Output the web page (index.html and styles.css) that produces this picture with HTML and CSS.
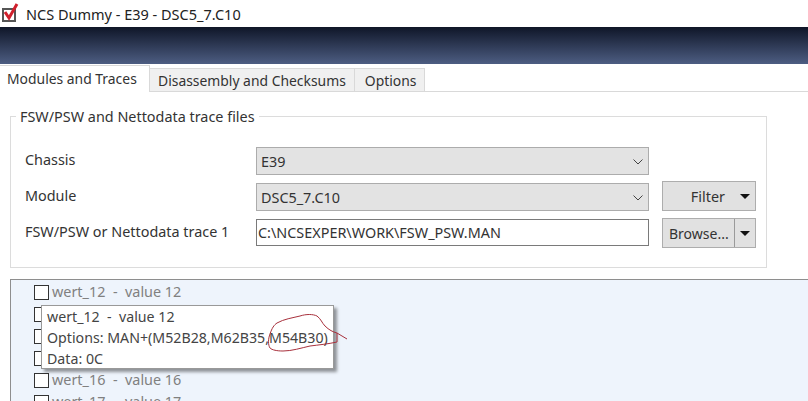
FILE: index.html
```html
<!DOCTYPE html>
<html lang="en">
<head>
  <meta charset="UTF-8">
  <title>NCS Dummy - E39 - DSC5_7.C10</title>
  <link rel="stylesheet" href="styles.css">
</head>
<body>
  <div class="titlebar">
    <svg class="app-icon" width="19" height="24" viewBox="0 0 19 24">
      <rect x="3" y="9" width="12" height="12" fill="#fff" stroke="#555" stroke-width="2"/>
      <path d="M5 12 L9 18 L17 4" fill="none" stroke="#d0202c" stroke-width="3"/>
    </svg>
    <span>NCS Dummy - E39 - DSC5_7.C10</span>
  </div>
  <div class="banner"></div>

  <div class="tabs">
    <div class="tab active">Modules and Traces</div>
    <div class="tab">Disassembly and Checksums</div>
    <div class="tab tab-last">Options</div>
  </div>

  <div class="page">
    <fieldset class="group">
      <legend>FSW/PSW and Nettodata trace files</legend>
      <div class="form">
        <label class="label-up">Chassis</label>
        <div class="combo">E39
          <svg class="chevron" width="10" height="6" viewBox="0 0 10 6"><path d="M0.5 0.5 L5 5 L9.5 0.5" fill="none" stroke="#444"/></svg>
        </div>
        <div></div>

        <label class="label-up">Module</label>
        <div class="combo">DSC5_7.C10
          <svg class="chevron" width="10" height="6" viewBox="0 0 10 6"><path d="M0.5 0.5 L5 5 L9.5 0.5" fill="none" stroke="#444"/></svg>
        </div>
        <div class="btn filter">Filter <span class="arrow"></span></div>

        <label class="label-up">FSW/PSW or Nettodata trace 1</label>
        <div class="textbox">C:\NCSEXPER\WORK\FSW_PSW.MAN</div>
        <div class="btn browse"><span class="browse-text">Browse...</span><span class="browse-drop"><span class="arrow"></span></span></div>
      </div>
    </fieldset>

    <div class="list">
      <div class="row"><span class="check"></span>wert_12 &nbsp;-&nbsp; value 12</div>
      <div class="row"><span class="check"></span></div>
      <div class="row"><span class="check"></span></div>
      <div class="row"><span class="check"></span></div>
      <div class="row"><span class="check"></span>wert_16 &nbsp;-&nbsp; value 16</div>
      <div class="row"><span class="check"></span>wert_17 &nbsp;-&nbsp; value 17</div>

      <div class="tooltip">
        <div>wert_12 &nbsp;-&nbsp; value 12</div>
        <div>Options: MAN+(M52B28,M62B35,M54B30)</div>
        <div>Data: 0C</div>
      </div>
      <!-- red pen circle drawn on the screenshot -->
      <svg class="scribble" width="80" height="40" viewBox="0 0 80 40">
        <path d="M2 22 C4 16 6 13 9 11 C16 7 24 6 32 4 C38 2 45 2 49 4 C53 7 54 11 57 14 C61 18 65 20 69 21 L69 30 C60 32 50 33 42 34 C33 36 24 39 15 39 C9 39 4 38 2 36 C0 33 0 27 2 22 Z" fill="none" stroke="#a8303c"/>
        <path d="M69 21 L79 27" fill="none" stroke="#a8303c"/>
      </svg>
    </div>
  </div>
</body>
</html>
```

FILE: styles.css
```css
html, body {
  margin: 0;
  height: 401px;
  overflow: hidden;
}

body {
  font-family: "Noto Sans", "Open Sans", sans-serif;
  font-size: 14.4px;
  color: #333;
  background-color: #fff;
}

.titlebar {
  display: flex;
  align-items: center;
  gap: 7px;
  height: 27px;
  font-size: 14.5px;
  color: #222;
}

.app-icon {
  flex: none;
  margin-bottom: 3px;
}

.banner {
  height: 37px;
  background: linear-gradient(#0f1628, #4d5d82);
}

.tabs {
  display: flex;
  align-items: flex-end;
  height: 27px;
  font-size: 13.9px;
  border-bottom: 1px solid #d9d9d9;
}

.tab {
  height: 22px;
  padding: 0 8px;
  line-height: 23px;
  background-color: #f0f0f0;
  border: 1px solid #d9d9d9;
  border-bottom: none;
  border-left: none;
}

.tab.active {
  height: 26px;
  width: 134px;
  line-height: 25px;
  padding: 0 8px 0 7px;
  margin-bottom: -1px;
  background-color: #fff;
  border-left: none;
}

.tab-last {
  padding: 0 8px 0 10px;
}

.page {
  padding: 15px 0 0 10px;
}

.group {
  width: 755px;
  box-sizing: content-box;
  height: 159px;
  margin: 0;
  padding: 0;
  border: 1px solid #dcdcdc;
}

.group legend {
  margin-left: 5px;
  padding: 0 4px 0 4px;
  color: #333;
}

.form {
  display: grid;
  grid-template-columns: 218px 393px 94px;
  grid-template-rows: 28px 28px 27px;
  column-gap: 13px;
  row-gap: 8px;
  padding: 21px 0 0 14px;
  align-items: center;
}

.label-up {
  margin-top: -3px;
}

.combo {
  position: relative;
  height: 26px;
  line-height: 27px;
  padding-left: 4px;
  background-color: #e3e3e3;
  border: 1px solid #acacac;
}

.chevron {
  position: absolute;
  right: 5px;
  top: 11px;
}

.textbox {
  height: 25px;
  line-height: 25px;
  padding-left: 1px;
  background-color: #fff;
  border: 1px solid #7a7a7a;
}

.btn {
  box-sizing: border-box;
  height: 30px;
  background-color: #e1e1e1;
  border: 1px solid #adadad;
  display: flex;
  align-items: center;
}

.filter {
  justify-content: flex-end;
  gap: 15px;
  padding-right: 5px;
  margin-top: -2px;
}

.browse {
  margin-top: 1px;
}

.browse-text {
  flex: 1;
  padding-left: 6px;
  font-size: 14px;
}

.browse-drop {
  display: flex;
  align-items: center;
  justify-content: center;
  width: 20px;
  height: 100%;
  border-left: 1px solid #9a9a9a;
}

.arrow {
  display: inline-block;
  width: 0;
  height: 0;
  border-left: 5px solid transparent;
  border-right: 5px solid transparent;
  border-top: 5px solid #111;
}

.list {
  position: relative;
  margin-top: 11px;
  height: 122px;
  padding-top: 1px;
  background-color: #eef4fc;
  border-top: 1px solid #8e8e8e;
  border-left: 1px solid #8e8e8e;
}

.row {
  box-sizing: border-box;
  display: flex;
  align-items: center;
  height: 22px;
  padding: 0 0 2px 23px;
  color: #808080;
  white-space: pre;
}

.check {
  flex: none;
  width: 13px;
  height: 13px;
  margin: 2px 3px 0 0;
  border: 1px solid #333;
  background-color: #fff;
}

.tooltip {
  position: absolute;
  left: 30px;
  top: 25px;
  width: 276px;
  height: 62px;
  padding-left: 5px;
  padding-right: 10px;
  line-height: 21px;
  font-size: 14.2px;
  color: #444;
  background-color: #fff;
  border: 1px solid #999;
  box-shadow: 3px 3px 3px rgba(0, 0, 0, 0.4);
  white-space: nowrap;
}

.scribble {
  position: absolute;
  left: 257px;
  top: 32px;
  overflow: visible;
}
```
